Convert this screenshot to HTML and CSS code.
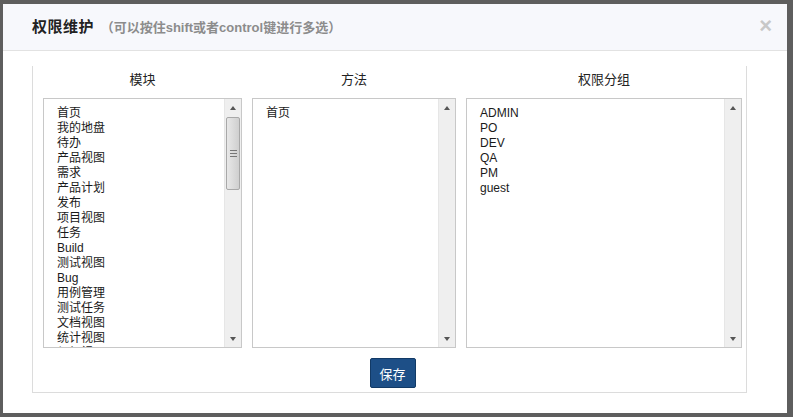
FILE: index.html
```html
<!DOCTYPE html>
<html lang="zh-CN">
<head>
  <meta charset="UTF-8" />
  <title>权限维护</title>
  <link rel="stylesheet" href="styles.css">
</head>
<body>
  <div class="modal">
    <!-- Header -->
    <div class="modal-header">
      <h3 class="modal-title">权限维护 <small>（可以按住shift或者control键进行多选）</small></h3>
      <span class="close">&times;</span>
    </div>

    <div class="modal-body">
      <div class="panel">
        <div class="columns">
          <div class="col col-module">
            <div class="col-title">模块</div>
            <div class="listbox">
              <ul class="items">
                <li>首页</li>
                <li>我的地盘</li>
                <li>待办</li>
                <li>产品视图</li>
                <li>需求</li>
                <li>产品计划</li>
                <li>发布</li>
                <li>项目视图</li>
                <li>任务</li>
                <li>Build</li>
                <li>测试视图</li>
                <li>Bug</li>
                <li>用例管理</li>
                <li>测试任务</li>
                <li>文档视图</li>
                <li>统计视图</li>
                <li>组织视图</li>
              </ul>
              <div class="scrollbar">
                <span class="arrow up"></span>
                <div class="track"><div class="thumb"><i></i><i></i><i></i></div></div>
                <span class="arrow down"></span>
              </div>
            </div>
          </div>

          <div class="col col-method">
            <div class="col-title">方法</div>
            <div class="listbox">
              <ul class="items">
                <li>首页</li>
              </ul>
              <div class="scrollbar">
                <span class="arrow up"></span>
                <div class="track"></div>
                <span class="arrow down"></span>
              </div>
            </div>
          </div>

          <div class="col col-group">
            <div class="col-title">权限分组</div>
            <div class="listbox">
              <ul class="items">
                <li>ADMIN</li>
                <li>PO</li>
                <li>DEV</li>
                <li>QA</li>
                <li>PM</li>
                <li>guest</li>
              </ul>
              <div class="scrollbar">
                <span class="arrow up"></span>
                <div class="track"></div>
                <span class="arrow down"></span>
              </div>
            </div>
          </div>
        </div>

        <div class="actions">
          <button type="button" class="btn-save">保存</button>
        </div>
      </div>
    </div>
  </div>
</body>
</html>
```

FILE: styles.css
```css
body {
  margin: 0;
  height: 417px;
  overflow: hidden;
  background: #5e5e5e;
  font-family: "Liberation Sans", "Noto Sans CJK SC", sans-serif;
  color: #222;
}

/* Dialog */
.modal {
  margin: 4px 0 0 3px;
  width: 784px;
  height: 409px;
  background: #fff;
  display: flex;
  flex-direction: column;
}

.modal-header {
  height: 47px;
  background: #f7f8fc;
  border-bottom: 1px solid #e2e2e2;
  display: flex;
  align-items: center;
  justify-content: space-between;
  padding: 0 15px 0 29px;
}

.modal-title {
  margin: -3px 0 0;
  font-size: 15px;
  font-weight: bold;
  color: #222;
  letter-spacing: 0.5px;
}

.modal-title small {
  font-size: 13px;
  color: #8c8c8c;
  font-weight: bold;
  letter-spacing: 0;
  margin-left: 2px;
}

.close {
  font-size: 22px;
  font-weight: bold;
  color: #c8c8c8;
  line-height: 1;
  margin-top: -3px;
}

.modal-body {
  flex: 1;
  padding: 15px 40px 20px 29px;
  display: flex;
}

.panel {
  flex: 1;
  border: 1px solid #dcdcdc;
  border-top: none;
  padding: 4px 4px 0 10px;
}

.columns {
  display: flex;
  gap: 10px;
}

.col-module { width: 199px; }
.col-method { width: 204px; }
.col-group { flex: 1; }

.col-title {
  height: 20px;
  line-height: 20px;
  text-align: center;
  font-size: 13px;
  margin-bottom: 8px;
}

/* List boxes with a classic scrollbar */
.listbox {
  height: 248px;
  border: 1px solid #c8c8c8;
  display: flex;
  overflow: hidden;
}

.items {
  flex: 1;
  list-style: none;
  margin: 0;
  padding: 7px 0 0 13px;
  font-size: 12px;
  line-height: 15px;
  color: #1a1a1a;
}

.scrollbar {
  width: 16px;
  background: #efefef;
  border-left: 1px solid #e6e6e6;
  display: flex;
  flex-direction: column;
}

.arrow {
  height: 17px;
  display: flex;
  align-items: center;
  justify-content: center;
}

.arrow::before {
  content: "";
  border-left: 3px solid transparent;
  border-right: 3px solid transparent;
}

.arrow.up::before { border-bottom: 4px solid #555; }
.arrow.down::before { border-top: 4px solid #555; }

.track {
  flex: 1;
}

.thumb {
  margin: 1px 1px 0 1px;
  height: 73px;
  border: 1px solid #a8a8a8;
  border-radius: 2px;
  background: linear-gradient(to right, #e8e8e8, #d9d9d9 60%, #cfcfcf);
  display: flex;
  flex-direction: column;
  align-items: center;
  justify-content: center;
  gap: 2px;
  box-sizing: border-box;
}

.thumb i {
  display: block;
  width: 7px;
  height: 1px;
  background: #777;
}

.actions {
  display: flex;
  justify-content: center;
  padding: 10px 0 4px;
}

.btn-save {
  width: 46px;
  height: 30px;
  background: #1d4f87;
  border: 1px solid #123a66;
  border-radius: 2px;
  color: #fff;
  font-family: inherit;
  font-size: 13px;
  padding: 0;
}
```
